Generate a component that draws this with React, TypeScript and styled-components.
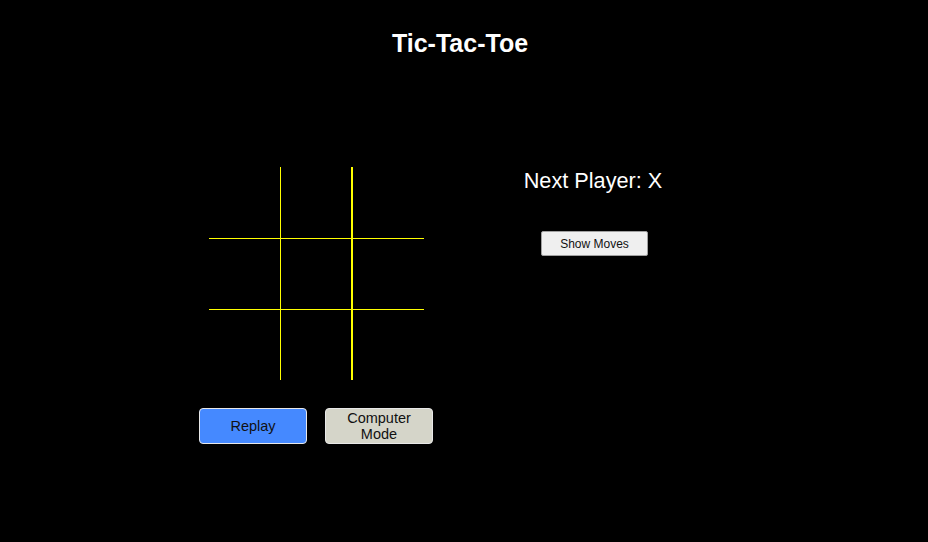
import React, { useState } from "react";
import styled, { createGlobalStyle } from "styled-components";

const Global = createGlobalStyle`
  html, body {
    margin: 0;
    padding: 0;
    background: #000;
    color: #fff;
    font-family: "Liberation Sans", Arial, sans-serif;
  }
`;

const Page = styled.div`
  width: 928px;
  min-height: 542px;
  background: #000;
`;

const Title = styled.h1`
  margin: 0;
  padding: 29px 8px 0 0;
  text-align: center;
  font-size: 25px;
  font-weight: bold;
  line-height: 29px;
`;

const Game = styled.div`
  display: flex;
  padding: 109px 0 0 199px;
  gap: 59px;
`;

const BoardColumn = styled.div`
  display: flex;
  flex-direction: column;
  align-items: center;
  width: 234px;
  gap: 28px;
`;

const Board = styled.div`
  display: grid;
  grid-template-columns: 71px 72px 72px;
  grid-template-rows: 71px 71px 71px;
`;

const Square = styled.button<{ $col: number; $row: number }>`
  all: unset;
  box-sizing: border-box;
  display: flex;
  align-items: center;
  justify-content: center;
  color: #ffff00;
  font-size: 40px;
  font-family: "Liberation Sans", Arial, sans-serif;
  border-left: ${(p) => (p.$col > 0 ? "1px solid #ffff00" : "none")};
  border-right: ${(p) => (p.$col === 1 ? "1px solid #ffff00" : "none")};
  border-top: ${(p) => (p.$row > 0 ? "1px solid #ffff00" : "none")};
  cursor: pointer;
`;

const Controls = styled.div`
  display: flex;
  gap: 18px;
`;

const ActionButton = styled.button<{ $tone: "blue" | "grey" }>`
  box-sizing: border-box;
  width: 108px;
  height: 36px;
  padding: 0 6px;
  border: 1px solid #e8e8e8;
  border-radius: 4px;
  background: ${(p) => (p.$tone === "blue" ? "#4589ff" : "#d5d5c9")};
  color: #111;
  font-family: "Liberation Sans", Arial, sans-serif;
  font-size: 14.5px;
  line-height: 16px;
  cursor: pointer;
`;

const InfoColumn = styled.div`
  display: flex;
  flex-direction: column;
  align-items: center;
  width: 250px;
  padding-top: 1px;
  margin-left: -24px;
`;

const Status = styled.div`
  font-size: 21.7px;
  line-height: 25px;
`;

const SmallButton = styled.button`
  box-sizing: border-box;
  margin: 38px 0 0 3px;
  width: 107px;
  height: 25px;
  border: 1px solid #a0a0a0;
  border-radius: 2px;
  background: #efefef;
  color: #111;
  font-family: "Liberation Sans", Arial, sans-serif;
  font-size: 12px;
  cursor: pointer;
`;

export default function App() {
  const [squares, setSquares] = useState<(string | null)[]>(Array(9).fill(null));
  const [xNext, setXNext] = useState(true);

  const play = (i: number) => {
    if (squares[i]) return;
    const next = squares.slice();
    next[i] = xNext ? "X" : "O";
    setSquares(next);
    setXNext(!xNext);
  };

  return (
    <Page>
      <Global />
      <Title>Tic-Tac-Toe</Title>
      <Game>
        <BoardColumn>
          <Board>
            {squares.map((v, i) => (
              <Square key={i} $col={i % 3} $row={Math.floor(i / 3)} onClick={() => play(i)}>
                {v}
              </Square>
            ))}
          </Board>
          <Controls>
            <ActionButton
              $tone="blue"
              onClick={() => {
                setSquares(Array(9).fill(null));
                setXNext(true);
              }}
            >
              Replay
            </ActionButton>
            <ActionButton $tone="grey">Computer Mode</ActionButton>
          </Controls>
        </BoardColumn>
        <InfoColumn>
          <Status>Next Player: {xNext ? "X" : "O"}</Status>
          <SmallButton>Show Moves</SmallButton>
        </InfoColumn>
      </Game>
    </Page>
  );
}
